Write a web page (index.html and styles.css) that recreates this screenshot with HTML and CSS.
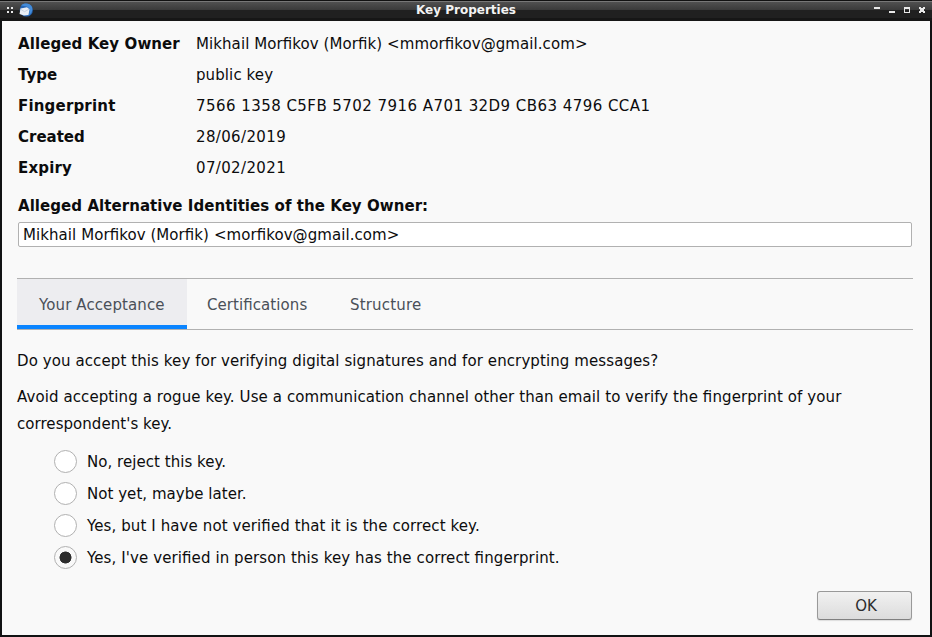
FILE: index.html
```html
<!DOCTYPE html>
<html lang="en">
<head>
<meta charset="utf-8">
<title>Key Properties</title>
<link rel="stylesheet" href="styles.css">
</head>
<body>
<div class="window">
  <header class="titlebar">
    <svg class="tb-left" width="40" height="21" viewBox="0 0 40 21">
      <path fill="#e8e8e8" d="M7 7h2v2H7zM11 7h2v2h-2zM7 11h2v2H7zM11 11h2v2h-2z"/>
      <circle cx="26.300" cy="10" r="6.600" fill="#2464b4"/>
      <path d="M21 5.500c3-3 9-2.500 11 1.500 1 4-1 7-3.500 8.500 2-4 1-8-2-9z" fill="#438bd8"/>
      <path d="M20.500 8.500l6.500-1.200 2.500 2-1 5.700-4.500.5-4.500-1.500z" fill="#e9eef5"/>
      <path d="M21 9.500l3.500 2.200 4.500-2.500" fill="none" stroke="#b8c4d6" stroke-width=".7"/>
    </svg>
    <h1 class="title"><span class="t t-title">Key Properties</span></h1>
    <svg class="tb-right" width="60" height="21" viewBox="872 0 60 21">
      <path fill="#e8e8e8" d="M874 7h6v2h-6zM889 11h6v2h-6z"/>
      <path fill="#e8e8e8" fill-rule="evenodd" d="M904 7h6v6h-6zM905 9h4v3h-4z"/>
      <path fill="#e8e8e8" d="M919 7h2v1h2V7h2v2h-1v2h1v2h-2v-1h-2v1h-2v-2h1V9h-1z"/>
    </svg>
  </header>
  <main class="content">
    <dl class="details">
      <dt><span class="t t-owner">Alleged Key Owner</span></dt><dd><span class="t t-ownerv">Mikhail Morfikov (Morfik) &lt;mmorfikov@gmail.com&gt;</span></dd>
      <dt><span class="t t-type">Type</span></dt><dd><span class="t t-typev">public key</span></dd>
      <dt><span class="t t-fp">Fingerprint</span></dt><dd><span class="t t-fpv">7566 1358 C5FB 5702 7916 A701 32D9 CB63 4796 CCA1</span></dd>
      <dt><span class="t t-created">Created</span></dt><dd><span class="t t-date">28/06/2019</span></dd>
      <dt><span class="t t-expiry">Expiry</span></dt><dd><span class="t t-date">07/02/2021</span></dd>
    </dl>
    <h2 class="alt"><span class="t t-alt">Alleged Alternative Identities of the Key Owner:</span></h2>
    <div class="identities"><span class="t t-id">Mikhail Morfikov (Morfik) &lt;morfikov@gmail.com&gt;</span></div>
    <nav class="tabs">
      <div class="tab selected"><span class="t t-tab1">Your Acceptance</span></div>
      <div class="tab tab-cert"><span class="t t-tab2">Certifications</span></div>
      <div class="tab"><span class="t t-tab3">Structure</span></div>
    </nav>
    <p class="question"><span class="t t-q">Do you accept this key for verifying digital signatures and for encrypting messages?</span></p>
    <p class="advice"><span class="t t-a1">Avoid accepting a rogue key. Use a communication channel other than email to verify the fingerprint of your</span><br><span class="t t-a2">correspondent's key.</span></p>
    <div class="options">
      <label class="option"><i class="radio"></i><span class="t t-o1">No, reject this key.</span></label>
      <label class="option"><i class="radio"></i><span class="t t-o2">Not yet, maybe later.</span></label>
      <label class="option"><i class="radio"></i><span class="t t-o3">Yes, but I have not verified that it is the correct key.</span></label>
      <label class="option"><i class="radio checked"></i><span class="t t-o4">Yes, I've verified in person this key has the correct fingerprint.</span></label>
    </div>
    <footer class="actions"><button class="ok">OK</button></footer>
  </main>
</div>
</body>
</html>
```
FILE: styles.css
```css
* { box-sizing: border-box; margin: 0; padding: 0; }
body { font: 15px/31px "DejaVu Sans", sans-serif; color: #0c0c0d; background: #111213; }
.window { width: 932px; height: 637px; display: flex; flex-direction: column; }
.titlebar {
  height: 21px; flex: none; display: flex; justify-content: space-between;
  background: linear-gradient(#111 0 1px, #777 1px 2px, #505050 2px, #3a3a3a 10px, #202020 10px, #202020 18px, #161616 18px);
}
.titlebar svg { display: block; }
.tb-left { margin-right: 20px; }
.title { font-size: 12px; line-height: 20px; color: #f3f3f3; }
.t { white-space: nowrap; font-feature-settings: "liga" 1; }
.t-owner { letter-spacing: .09px; }
.t-ownerv { letter-spacing: .08px; }
.t-typev { letter-spacing: .1px; }
.t-fp { letter-spacing: .18px; }
.t-fpv { letter-spacing: .45px; }
.t-date { letter-spacing: .36px; }
.t-expiry { letter-spacing: .16px; }
.t-alt { letter-spacing: .055px; }
.t-id { letter-spacing: .07px; }
.t-tab1 { letter-spacing: .1px; }
.t-tab2 { letter-spacing: .07px; }
.t-tab3 { letter-spacing: .18px; }
.t-q { letter-spacing: .095px; }
.t-a1 { letter-spacing: .095px; }
.t-a2 { letter-spacing: .05px; }
.t-o1, .t-o2 { letter-spacing: .04px; }
.t-o3 { letter-spacing: .1px; }
.t-o4 { letter-spacing: .1px; }
.content { flex: 1; margin: 0 2px 2px; padding: 8px 17px 15px 15px; background: #f9f9f9; display: flex; flex-direction: column; }
.details { display: grid; grid-template-columns: 178px 1fr; grid-auto-rows: 31px; padding-left: 1px; }
dt, .alt { font-weight: bold; }
.alt { font-size: 15px; line-height: 31px; margin: 7px 0 0 1px; }
.identities { height: 25px; margin: 0 1px; padding-left: 4px; line-height: 25px; border: 1px solid #b1b1b1; border-radius: 2px; background: #fff; }
.tabs { height: 52px; margin-top: 31px; display: flex; border-top: 1px solid #b1b1b1; border-bottom: 1px solid #b1b1b1; color: #4a5058; line-height: 52px; }
.tab { height: 50px; }
.selected { width: 170px; padding-left: 22px; background: #ededf0; border-bottom: 4px solid #0a84ff; }
.tab-cert { width: 143px; margin-left: 20px; }
.question { line-height: 27px; margin-top: 18px; }
.advice { line-height: 27px; margin-top: 9px; }
.options { display: flex; flex-direction: column; margin: 7px 0 0 37px; }
.option { height: 32px; display: flex; align-items: center; gap: 10px; }
.option .t { padding-top: 2px; line-height: 28px; }
.radio { width: 23px; height: 23px; flex: none; border: 1px solid #b1b1b1; border-radius: 50%; background: #fff; }
.radio.checked { background: radial-gradient(circle, #2d2d2d 5.7px, #f9f9f9 6.3px); }
.actions { margin-top: auto; display: flex; justify-content: flex-end; padding-right: 1px; }
.ok { width: 95px; height: 29px; padding-left: 3px; font: 15px/26px "DejaVu Sans", sans-serif; color: #2d2d2d; border: 1px solid #999; border-bottom-color: #808080; border-radius: 3px; background: linear-gradient(#f1f1f1, #dcdcdc); box-shadow: 0 1px 1px #ddd; }
```
